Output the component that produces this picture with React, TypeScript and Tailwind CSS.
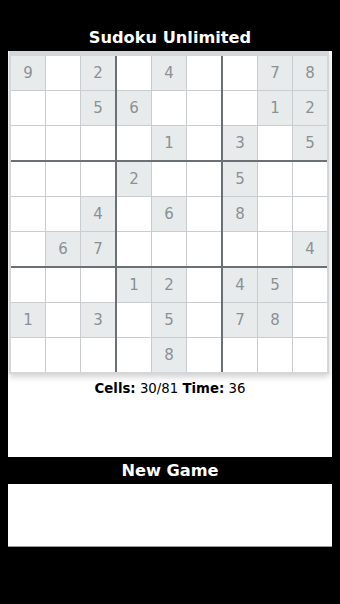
import React from "react";

const PUZZLE: string[] = [
  "9.2.4..78",
  "..56...12",
  "....1.3.5",
  "...2..5..",
  "..4.6.8..",
  ".67.....4",
  "...12.45.",
  "1.3.5.78.",
  "....8....",
];

function Box({ br, bc }: { br: number; bc: number }) {
  const cells = [];
  for (let r = 0; r < 3; r++) {
    for (let c = 0; c < 3; c++) {
      const ch = PUZZLE[br * 3 + r][bc * 3 + c];
      const given = ch !== ".";
      cells.push(
        <div
          key={`${r}-${c}`}
          className={`w-[34px] h-[34px] flex items-center justify-center text-[15px] text-[#8a9194] ${
            given ? "bg-[#e8ebec]" : "bg-white"
          }`}
        >
          {given ? ch : ""}
        </div>
      );
    }
  }
  return <div className="grid grid-cols-3 gap-px bg-[#c9cdcf]">{cells}</div>;
}

export default function App() {
  const boxes = [];
  for (let br = 0; br < 3; br++) {
    for (let bc = 0; bc < 3; bc++) {
      boxes.push(<Box key={`${br}-${bc}`} br={br} bc={bc} />);
    }
  }
  return (
    <div className="w-[340px] h-[604px] bg-black font-['DejaVu_Sans',sans-serif] flex flex-col">
      <div className="h-[51px] flex items-end justify-center pb-[2px]">
        <h1 className="text-white font-bold text-[16.2px] leading-[22px]">Sudoku Unlimited</h1>
      </div>
      <div className="mx-[8px] bg-white h-[406px] flex flex-col">
        <div className="ml-px w-[320px] border-x-2 border-b-2 border-t-[5px] border-[#d3d7d9] shadow-[0_3px_6px_rgba(0,0,0,0.18)]">
          <div className="grid grid-cols-3 gap-[2px] bg-[#6a7074]">{boxes}</div>
        </div>
        <div className="mt-[6px] text-center text-[13.3px] leading-[18px] text-black">
          <span className="font-bold">Cells:</span> 30/81 <span className="font-bold">Time:</span> 36
        </div>
      </div>
      <div className="h-[27px] flex items-center justify-center">
        <span className="text-white font-bold text-[16.2px] leading-[22px]">New Game</span>
      </div>
      <div className="mx-[8px] h-[63px] bg-white border-b border-[#9a9a9a]"></div>
    </div>
  );
}
